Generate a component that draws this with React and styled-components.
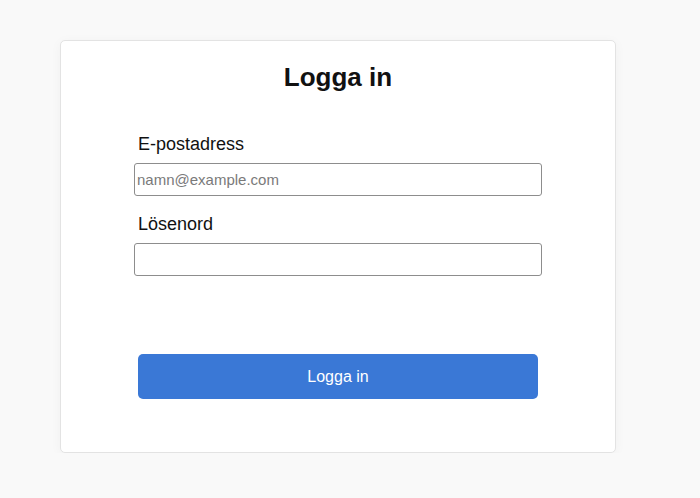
import React from "react";
import styled, { createGlobalStyle } from "styled-components";

const GlobalStyle = createGlobalStyle`
  html, body {
    margin: 0;
    padding: 0;
    background: #f9f9f9;
    font-family: "Liberation Sans", Arial, sans-serif;
  }
`;

const Page = styled.main`
  padding: 40px 0 0 60px;
`;

const Card = styled.section`
  box-sizing: border-box;
  width: 556px;
  height: 413px;
  background: #ffffff;
  border: 1px solid #e3e3e3;
  border-radius: 5px;
  box-shadow: 0 2px 12px rgba(0, 0, 0, 0.04);
  padding: 21px 73px 0;
`;

const Title = styled.h1`
  margin: 0;
  font-size: 26px;
  font-weight: 700;
  line-height: 30px;
  color: #111;
  text-align: center;
`;

const Form = styled.form`
  display: flex;
  flex-direction: column;
  margin-top: 42px;
`;

const Label = styled.label`
  display: block;
  padding-left: 4px;
  font-size: 18px;
  line-height: 21px;
  color: #111;
  margin-top: ${(p) => (p.$first ? "0" : "18px")};
  margin-bottom: 8px;
`;

const Input = styled.input`
  box-sizing: border-box;
  width: 408px;
  height: 33px;
  margin: 0;
  padding: 0 2px;
  border: 1px solid #8d8d8d;
  border-radius: 3px;
  font-family: inherit;
  font-size: 15px;
  color: #111;
  background: #fff;
  outline: none;

  &::placeholder {
    color: #7a7a7a;
  }
`;

const Button = styled.button`
  box-sizing: border-box;
  width: 400px;
  height: 45px;
  margin: 78px 4px 0;
  border: none;
  border-radius: 5px;
  background: #3a78d6;
  color: #fff;
  font-family: inherit;
  font-size: 16px;
  cursor: pointer;
`;

export default function App() {
  return (
    <>
      <GlobalStyle />
      <Page>
        <Card>
          <Title>Logga in</Title>
          <Form onSubmit={(e) => e.preventDefault()}>
            <Label $first htmlFor="email">E-postadress</Label>
            <Input id="email" type="email" placeholder="namn@example.com" />
            <Label htmlFor="password">Lösenord</Label>
            <Input id="password" type="password" />
            <Button type="submit">Logga in</Button>
          </Form>
        </Card>
      </Page>
    </>
  );
}
